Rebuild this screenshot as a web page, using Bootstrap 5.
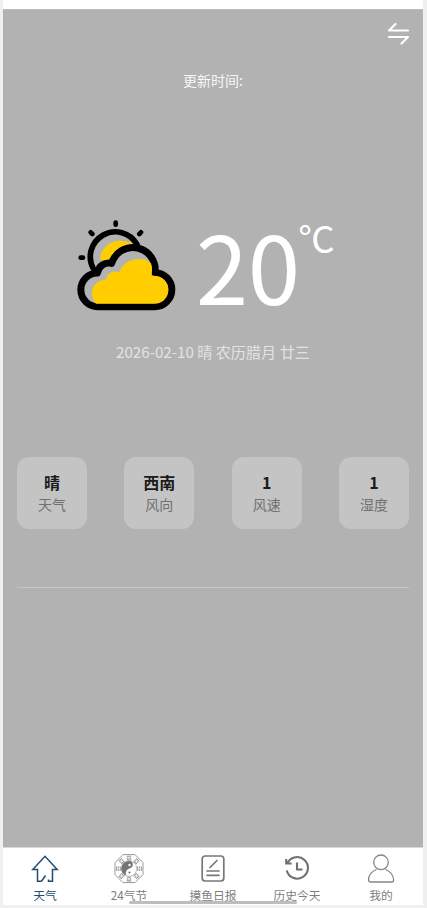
<!DOCTYPE html>
<html lang="zh-CN">
<head>
<meta charset="utf-8">
<meta name="viewport" content="width=device-width, initial-scale=1">
<title>天气</title>
<link href="https://cdn.jsdelivr.net/npm/bootstrap@5.3.0/dist/css/bootstrap.min.css" rel="stylesheet">
<style>
body{background:#f0f0f0;font-family:"Noto Sans CJK SC",sans-serif;height:908px;overflow:hidden}
.phone{width:420px;height:905px;margin-left:3px;background:#fff;padding-top:9px}
.weather{height:838px;background:#b2b2b2;border-top:1px solid #bcbcbc;padding:0 14px}
.topbar{height:59px;padding-top:10px}
.updated{font-size:14px;line-height:20px;padding-top:1px;height:20px;color:#f7f7f7}
.now{height:130px;margin-top:111px;padding-left:43px}
.degrees{font-size:93.5px;line-height:129px;margin-left:-4px;-webkit-text-stroke:.2px #fff}
.unit{font-size:36.5px;line-height:40px;margin-top:18px;margin-left:-1.5px}
.today{font-size:15.15px;line-height:22px;margin-top:10px;color:#e2e2e2}
.tiles{margin-top:95px}
.tile{width:70px;height:72px;border-radius:12px;background:#c4c4c4;padding-top:15px}
.tile strong{font-size:16px;line-height:21px;color:#1b1b1b}
.tile span{font-size:14px;line-height:22px;color:#707070}
.rule{height:1px;margin-top:58px;background:#c6c6c6}
.tabs{height:58px;border-top:1px solid #d8d8d8;color:#7b7f83}
.tab{width:84px;font-size:11.8px;line-height:18px;padding-top:6px}
.tab svg{margin-bottom:2px}
.tab.current{color:#234b73}
.home-bar{left:126px;width:168px;top:53px;height:3px;border-radius:2px;background:#bdbdbd}
</style>
<script src="https://cdn.jsdelivr.net/npm/bootstrap@5.3.0/dist/js/bootstrap.bundle.min.js"></script>
</head>
<body>
<div class="phone">
  <main class="weather">
    <div class="topbar d-flex justify-content-end">
      <svg width="22" height="28" viewBox="0 0 22 28" fill="none" stroke="#fff" stroke-width="2.200" stroke-linecap="round" stroke-linejoin="round"><path d="M21 10.500H2L8.500 4M2 17H21L14.500 23.500"/></svg>
    </div>
    <div class="updated text-center">更新时间:</div>
    <div class="now d-flex text-white">
      <svg width="140" height="130" viewBox="0 0 420 390" fill="none" stroke="#000" stroke-linecap="round" stroke-linejoin="round">
        <path fill="#ffcd00" stroke="none" d="M120 180C122 135 165 108 218 130L165 165L150 180Z"/>
        <path stroke-width="17" d="M101 208A71 71 0 0 1 231 133"/>
        <path stroke-width="14" d="M167 68v6M92 97l5 5M243 97l-5 5M62 173h7"/>
        <path fill="#b2b2b2" stroke-width="21" d="M114 320A50 50 0 0 1 112 219A35 35 0 0 1 155 190A66.700 66.700 0 0 1 285 218A50.500 50.500 0 0 1 284 320Z"/>
        <path fill="#ffcd00" stroke="none" d="M108 311C84 282 98 240 137 239C142 217 162 210 178 217C193 172 252 168 273 190C278 205 276 218 274 228C302 224 325 243 325 269C325 294 306 311 284 311Z"/>
      </svg>
      <span class="degrees">20</span><span class="unit">℃</span>
    </div>
    <div class="today text-center">2026-02-10 晴 农历腊月 廿三</div>
    <div class="tiles d-flex justify-content-between text-center">
      <div class="tile d-flex flex-column"><strong>晴</strong><span>天气</span></div>
      <div class="tile d-flex flex-column"><strong>西南</strong><span>风向</span></div>
      <div class="tile d-flex flex-column"><strong>1</strong><span>风速</span></div>
      <div class="tile d-flex flex-column"><strong>1</strong><span>湿度</span></div>
    </div>
    <div class="rule"></div>
  </main>
  <nav class="tabs d-flex position-relative">
    <div class="tab current d-flex flex-column align-items-center">
      <svg width="30" height="30" viewBox="0 0 30 30" fill="none" stroke="currentColor" stroke-width="1.500"><path d="M11.500 27.300H7.500V15.500H2.800L15 2.300L27.200 15.500H22.500V27.300H18.500V25.500M11.500 27.300L15.500 21.500"/></svg>
      <span>天气</span>
    </div>
    <div class="tab d-flex flex-column align-items-center">
      <svg width="30" height="30" viewBox="0 0 30 30" fill="none" stroke="#777">
        <path stroke="#999" stroke-width="1" d="M9 .6H21L29 8.600V20.600L21 28.600H9L1 20.600V8.600Z"/>
        <circle cx="15" cy="14.600" r="7.700" fill="#fff" stroke="#aaa" stroke-width=".7"/>
        <path fill="#747474" stroke="none" d="M17.500 7.400A7.600 7.600 0 1 0 12.500 21.800C11 18.500 12 16 15.500 14.600C19 13 20 10 17.500 7.400Z"/>
        <circle cx="15.500" cy="11" r="1.200" fill="#fff" stroke="none"/><circle cx="15.500" cy="18.500" r="1.100" fill="#777" stroke="none"/>
        <g id="trigram" stroke="#969696" stroke-width="1.100"><path d="M12.800 2.300h4.400M12.800 4.100h1.700M15.500 4.100h1.700M12.800 5.900h4.400"/></g>
        <use href="#trigram" transform="rotate(45 15 14.600)"/><use href="#trigram" transform="rotate(90 15 14.600)"/><use href="#trigram" transform="rotate(135 15 14.600)"/><use href="#trigram" transform="rotate(180 15 14.600)"/><use href="#trigram" transform="rotate(225 15 14.600)"/><use href="#trigram" transform="rotate(270 15 14.600)"/><use href="#trigram" transform="rotate(315 15 14.600)"/>
      </svg>
      <span>24气节</span>
    </div>
    <div class="tab d-flex flex-column align-items-center">
      <svg width="30" height="30" viewBox="0 0 30 30" fill="none" stroke="#777" stroke-width="1.700" stroke-linecap="round"><rect x="4.200" y="2" width="21.600" height="25" rx="3"/><path d="M19 6.500L12 13.500M9 17H21M9 21.300H21"/></svg>
      <span>摸鱼日报</span>
    </div>
    <div class="tab d-flex flex-column align-items-center">
      <svg width="30" height="30" viewBox="0 0 30 30" fill="none" stroke="#707070" stroke-width="2.100"><path d="M5.500 9A10.800 10.800 0 1 1 4.700 16.500M4.200 5V9.500H9.700M15 8.500V15.500H20.500"/></svg>
      <span>历史今天</span>
    </div>
    <div class="tab d-flex flex-column align-items-center">
      <svg width="30" height="30" viewBox="0 0 30 30" fill="none" stroke="#858585" stroke-width="1.300"><circle cx="15" cy="8.300" r="7.300"/><path d="M10.500 15.500C5.500 17.500 2.500 21.500 2.600 26Q2.700 28 4.800 28H25.500Q27.600 28 27.600 26C27.500 21.500 24.500 17.500 19.500 15.500"/></svg>
      <span>我的</span>
    </div>
    <div class="home-bar position-absolute"></div>
  </nav>
</div>
</body>
</html>
